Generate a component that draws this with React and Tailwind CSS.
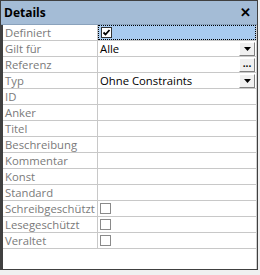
import React from 'react';

const rows = [
  { label: 'Definiert', kind: 'check', checked: true, selected: true },
  { label: 'Gilt für', kind: 'combo', value: 'Alle' },
  { label: 'Referenz', kind: 'dots' },
  { label: 'Typ', kind: 'combo', value: 'Ohne Constraints' },
  { label: 'ID' },
  { label: 'Anker' },
  { label: 'Titel' },
  { label: 'Beschreibung' },
  { label: 'Kommentar' },
  { label: 'Konst' },
  { label: 'Standard' },
  { label: 'Schreibgeschützt', kind: 'check' },
  { label: 'Lesegeschützt', kind: 'check' },
  { label: 'Veraltet', kind: 'check' },
];

function DropButton({ dots }) {
  return (
    <div className="w-[16px] h-[14px] bg-[#f0f0f0] border-t border-l border-white border-r border-b border-r-[#808080] border-b-[#808080] flex items-center justify-center shrink-0">
      {dots ? (
        <span className="text-[10px] leading-none font-bold text-black -mt-[3px]">...</span>
      ) : (
        <svg width="7" height="4" viewBox="0 0 7 4">
          <path d="M0 0h7L3.5 4z" fill="#000" />
        </svg>
      )}
    </div>
  );
}

function Check({ checked }) {
  return (
    <div className={`w-[11px] h-[11px] border ${checked ? 'border-[#333] bg-white' : 'border-[#8a8a8a] bg-white'} flex items-center justify-center`}>
      {checked && (
        <svg width="9" height="9" viewBox="0 0 9 9">
          <path d="M1.5 4.5l2 2 4-4.5" stroke="#000" strokeWidth="1.8" fill="none" />
        </svg>
      )}
    </div>
  );
}

export default function App() {
  return (
    <div className="w-[260px] h-[275px] bg-[#f0f0f0] font-['Open_Sans','Noto_Sans',sans-serif]">
      <div className="w-[258px] h-[270px] border border-[#404040] flex flex-col">
        {/* titel */}
        <div className="h-[24px] bg-[#a4bcd6] flex items-center justify-between pl-[3px] pr-[6px] border-b border-[#8aa2bc]">
          <span className="text-[12px] font-bold text-black">Details</span>
          <span className="text-[13px] font-bold text-black leading-none">✕</span>
        </div>

        <div className="flex-1 bg-white border-l-2 border-l-[#404040] border-r border-r-[#d0d0d0] flex flex-col">
          {rows.map((r) => (
            <div key={r.label} className="h-[16px] flex border-b border-[#c8c8c8] text-[11.3px] leading-[15px]">
              <div className="w-[95px] shrink-0 border-r border-[#c8c8c8] pl-[2px] text-[#7a7a7a] whitespace-nowrap overflow-hidden">
                {r.label}
              </div>
              <div
                className={`flex-1 flex items-center pl-[2px] pr-[1px] ${
                  r.selected ? 'bg-[#a8cbf0] border border-dotted border-black' : ''
                }`}
              >
                {r.kind === 'check' && <Check checked={r.checked} />}
                {r.kind === 'combo' && (
                  <>
                    <span className="flex-1 text-black">{r.value}</span>
                    <DropButton />
                  </>
                )}
                {r.kind === 'dots' && (
                  <>
                    <span className="flex-1" />
                    <DropButton dots />
                  </>
                )}
              </div>
            </div>
          ))}
        </div>
      </div>
    </div>
  );
}
